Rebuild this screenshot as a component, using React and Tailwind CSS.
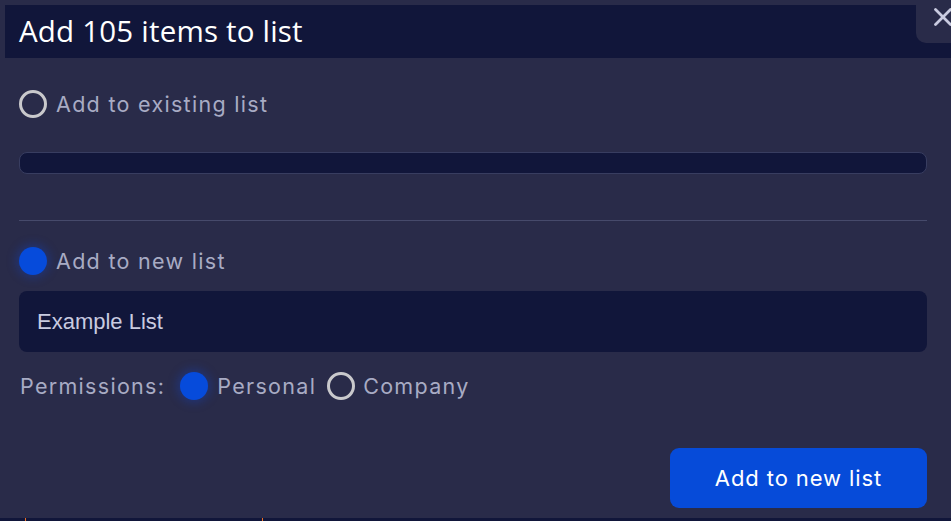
import { X } from 'lucide-react';

const Radio = ({ checked }) =>
  checked ? (
    <span className="block w-[28px] h-[28px] rounded-full bg-[#064bdb] shadow-[0_0_10px_3px_rgba(20,70,200,0.35)] shrink-0" />
  ) : (
    <span className="block w-[28px] h-[28px] rounded-full border-[3px] border-[#c9c9cc] shrink-0" />
  );

const App = () => {
  return (
    <div className="relative w-[951px] h-[521px] bg-[#11163a] overflow-hidden flex flex-col" style={{ fontFamily: 'Inter, sans-serif' }}>
      <div className="flex flex-1">
        {/* page behind the modal */}
        <div className="w-[5px] flex flex-col">
          <div className="h-[90px] bg-[#292b48]" />
          <div className="h-[100px] bg-[#25283f]" />
          <div className="h-[120px] bg-[#292b48]" />
          <div className="h-[45px] bg-[#23263f]" />
          <div className="flex-1 bg-[#11163a]" />
        </div>

        <div className="flex-1 bg-[#292b49] flex flex-col pt-[5px] pr-[24px] pb-[10px] -ml-[5px] relative">
          <div className="ml-[5px] -mr-[24px] h-[53px] bg-[#11163a] flex items-center pl-[14px]">
            <h2 className="text-[29.5px] text-white tracking-[0.2px]" style={{ fontFamily: '"Open Sans", sans-serif' }}>
              Add 105 items to list
            </h2>
          </div>

          <button className="absolute top-0 right-0 w-[35px] h-[43px] bg-[#292b49] rounded-bl-[10px] text-[#c9cbe0]">
            <X size={30} strokeWidth={2.2} className="absolute left-[12px] top-[2px]" />
          </button>

          <div className="pl-[19px] flex flex-col">
            <label className="flex items-center gap-[9px] mt-[32px] h-[28px]">
              <Radio checked={false} />
              <span className="text-[21.5px] text-[#a8abc4] tracking-[1.3px]">Add to existing list</span>
            </label>

            <div className="mt-[34px] h-[22px] rounded-[8px] bg-[#11163a] border border-[#383d60]" />

            <div className="mt-[46px] h-px bg-[#464a6b]" />

            <label className="flex items-center gap-[9px] mt-[26px] h-[28px]">
              <Radio checked />
              <span className="text-[21.5px] text-[#a8abc4] tracking-[1.3px]">Add to new list</span>
            </label>

            <div className="mt-[16px] h-[61px] rounded-[8px] bg-[#11163a] flex items-center pl-[18px]">
              <span className="text-[22px] text-[#c9cbe0]" style={{ fontFamily: '"Liberation Sans", Arial, sans-serif' }}>
                Example List
              </span>
            </div>

            <div className="flex items-center mt-[20px] h-[28px] text-[21.5px] text-[#a8abc4] tracking-[1.3px]">
              <span className="ml-[1px]">Permissions:</span>
              <span className="ml-[15px]"><Radio checked /></span>
              <span className="ml-[9px]">Personal</span>
              <span className="ml-[11px]"><Radio checked={false} /></span>
              <span className="ml-[8px]">Company</span>
            </div>

            <div className="flex justify-end mt-[48px]">
              <button className="w-[257px] h-[60px] rounded-[9px] bg-[#064bd9] text-white text-[22px] tracking-[0.9px]">
                Add to new list
              </button>
            </div>
          </div>
        </div>
      </div>

      <div className="h-[4px] bg-[#11163a] relative">
        <span className="absolute left-[25px] top-0 w-px h-[4px] bg-[#f07020]" />
        <span className="absolute left-[262px] top-0 w-px h-[4px] bg-[#f07020]" />
      </div>
    </div>
  );
};

export default App;
